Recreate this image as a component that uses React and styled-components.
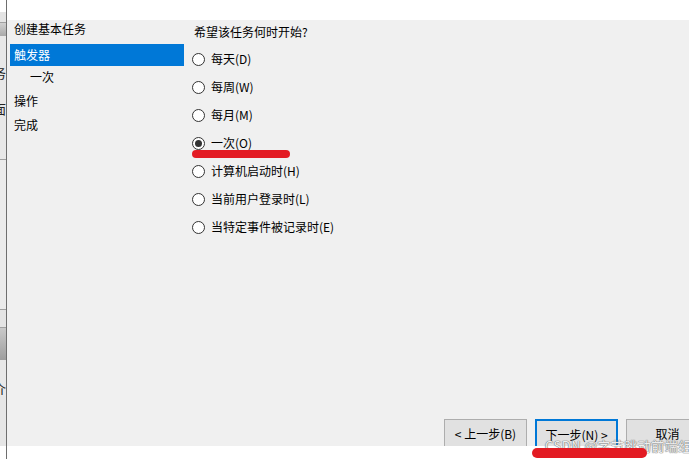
import React from "react";
import styled, { createGlobalStyle } from "styled-components";

const GlobalStyle = createGlobalStyle`
    html, body {
        margin: 0;
        padding: 0;
        background: #fff;
    }
    body {
        font-family: "Noto Sans CJK SC", "Liberation Sans", sans-serif;
        font-size: 12px;
        color: #000;
    }
`;

const Screen = styled.div`
    position: relative;
    display: flex;
    width: 689px;
    height: 459px;
    overflow: hidden;
    background: #fff;
`;

const EdgeStrip = styled.div`
    display: flex;
    flex-direction: column;
    width: 6px;
    flex-shrink: 0;
    border-right: 1px solid #6e6e6e;
    background: #e8e8e8;
`;

const EdgeCell = styled.div`
    height: ${(p) => p.$h}px;
    flex-shrink: 0;
    background: ${(p) => p.$bg || "#e8e8e8"};
    border-bottom: ${(p) => (p.$line ? "1px solid #a0a0a0" : "none")};
    overflow: hidden;
    display: flex;
    justify-content: flex-end;
    align-items: center;
    font-size: 13px;
    line-height: 1;
    white-space: nowrap;
    color: #222;
`;

const Window = styled.div`
    display: flex;
    flex-direction: column;
    flex: 1;
    min-width: 0;
`;

const TopBand = styled.div`
    height: 20px;
    background: #fff;
    flex-shrink: 0;
`;

const Body = styled.div`
    display: flex;
    flex-direction: column;
    height: 426px;
    background: #f0f0f0;
    overflow: hidden;
`;

const Columns = styled.div`
    display: flex;
    flex: 1;
`;

const Nav = styled.div`
    display: flex;
    flex-direction: column;
    width: 174px;
    padding-left: 3px;
    flex-shrink: 0;
`;

const NavItem = styled.div`
    box-sizing: border-box;
    height: ${(p) => p.$h || 22}px;
    margin-bottom: ${(p) => p.$mb || 0}px;
    padding-left: ${(p) => (p.$sub ? 20 : 4)}px;
    padding-bottom: 2px;
    display: flex;
    align-items: center;
    background: ${(p) => (p.$active ? "#0078d7" : "transparent")};
    color: ${(p) => (p.$active ? "#fff" : "#000")};
    white-space: nowrap;
`;

const Content = styled.div`
    display: flex;
    flex-direction: column;
    padding-left: 8px;
    flex: 1;
`;

const Question = styled.div`
    box-sizing: border-box;
    height: 18px;
    margin-top: 3px;
    margin-bottom: 4px;
    padding-left: 2px;
    padding-bottom: 1px;
    display: flex;
    align-items: center;
`;

const OptionRow = styled.label`
    position: relative;
    display: flex;
    align-items: center;
    gap: 6px;
    height: 28px;
`;

const OptionText = styled.span`
    position: relative;
    top: -1px;
`;

const Circle = styled.span`
    box-sizing: border-box;
    width: 13px;
    height: 13px;
    border-radius: 50%;
    border: 1px solid #333;
    background: #fff;
    display: flex;
    align-items: center;
    justify-content: center;
    &::after {
        content: "";
        display: ${(p) => (p.$checked ? "block" : "none")};
        width: 7px;
        height: 7px;
        border-radius: 50%;
        background: #333;
    }
`;

const Scribble = styled.span`
    position: absolute;
    left: ${(p) => p.$left}px;
    top: ${(p) => p.$top}px;
    width: ${(p) => p.$w}px;
    height: ${(p) => p.$h}px;
    border-radius: ${(p) => p.$h / 2}px;
    background: #e31b23;
`;

const Footer = styled.div`
    display: flex;
    gap: 8px;
    padding-left: 437px;
    height: 27px;
    flex-shrink: 0;
`;

const Button = styled.div`
    box-sizing: border-box;
    width: 83px;
    flex-shrink: 0;
    height: 27px;
    padding-top: 1px;
    display: flex;
    align-items: center;
    justify-content: center;
    background: #e1e1e1;
    border: ${(p) => (p.$primary ? "2px solid #0078d7" : "1px solid #adadad")};
    border-bottom: none;
    white-space: nowrap;
`;

const Watermark = styled.div`
    position: absolute;
    left: 545px;
    top: 436px;
    font-size: 13px;
    letter-spacing: 0.5px;
    color: rgba(255, 255, 255, 0.9);
    text-shadow: 0 0 1px #7a7a7a, 0 0 1px #7a7a7a, 0 0 1px #7a7a7a;
    white-space: nowrap;
`;

const options = [
    { label: "每天(D)" },
    { label: "每周(W)" },
    { label: "每月(M)" },
    { label: "一次(O)", checked: true, mark: true },
    { label: "计算机启动时(H)" },
    { label: "当前用户登录时(L)" },
    { label: "当特定事件被记录时(E)" },
];

const App = () => {
    return (
        <>
            <GlobalStyle />
            <Screen>
                <EdgeStrip>
                    <EdgeCell $h={12} $bg="#fff" />
                    <EdgeCell $h={10} $bg="#e4e4e4" $line />
                    <EdgeCell $h={13} $bg="linear-gradient(#d0d0d0, #a9a9a9)" />
                    <EdgeCell $h={28} />
                    <EdgeCell $h={16}>务</EdgeCell>
                    <EdgeCell $h={20} />
                    <EdgeCell $h={16}>面</EdgeCell>
                    <EdgeCell $h={43} $line />
                    <EdgeCell $h={149} $bg="#ebebeb" $line />
                    <EdgeCell $h={17} $bg="#e4e4e4" $line />
                    <EdgeCell $h={32} $bg="linear-gradient(#c9c9c9, #9e9e9e)" />
                    <EdgeCell $h={20} />
                    <EdgeCell $h={16}>介</EdgeCell>
                    <EdgeCell $h={50} $bg="#e6e6e6" />
                    <EdgeCell $h={13} $bg="#fff" />
                </EdgeStrip>
                <Window>
                    <TopBand />
                    <Body>
                        <Columns>
                            <Nav>
                                <NavItem $h={18} $mb={6}>创建基本任务</NavItem>
                                <NavItem $active>触发器</NavItem>
                                <NavItem $sub $mb={2}>一次</NavItem>
                                <NavItem $mb={2}>操作</NavItem>
                                <NavItem>完成</NavItem>
                            </Nav>
                            <Content>
                                <Question>希望该任务何时开始?</Question>
                                {options.map((o) => (
                                    <OptionRow key={o.label}>
                                        <Circle $checked={o.checked} />
                                        <OptionText>{o.label}</OptionText>
                                        {o.mark && <Scribble $left={0} $top={21} $w={98} $h={8} />}
                                    </OptionRow>
                                ))}
                            </Content>
                        </Columns>
                        <Footer>
                            <Button>&lt; 上一步(B)</Button>
                            <Button $primary>下一步(N) &gt;</Button>
                            <Button>取消</Button>
                        </Footer>
                    </Body>
                </Window>
                <Watermark>CSDN @字节跳动前端组</Watermark>
                <Scribble $left={532} $top={448} $w={115} $h={10} />
            </Screen>
        </>
    );
};

export default App;
